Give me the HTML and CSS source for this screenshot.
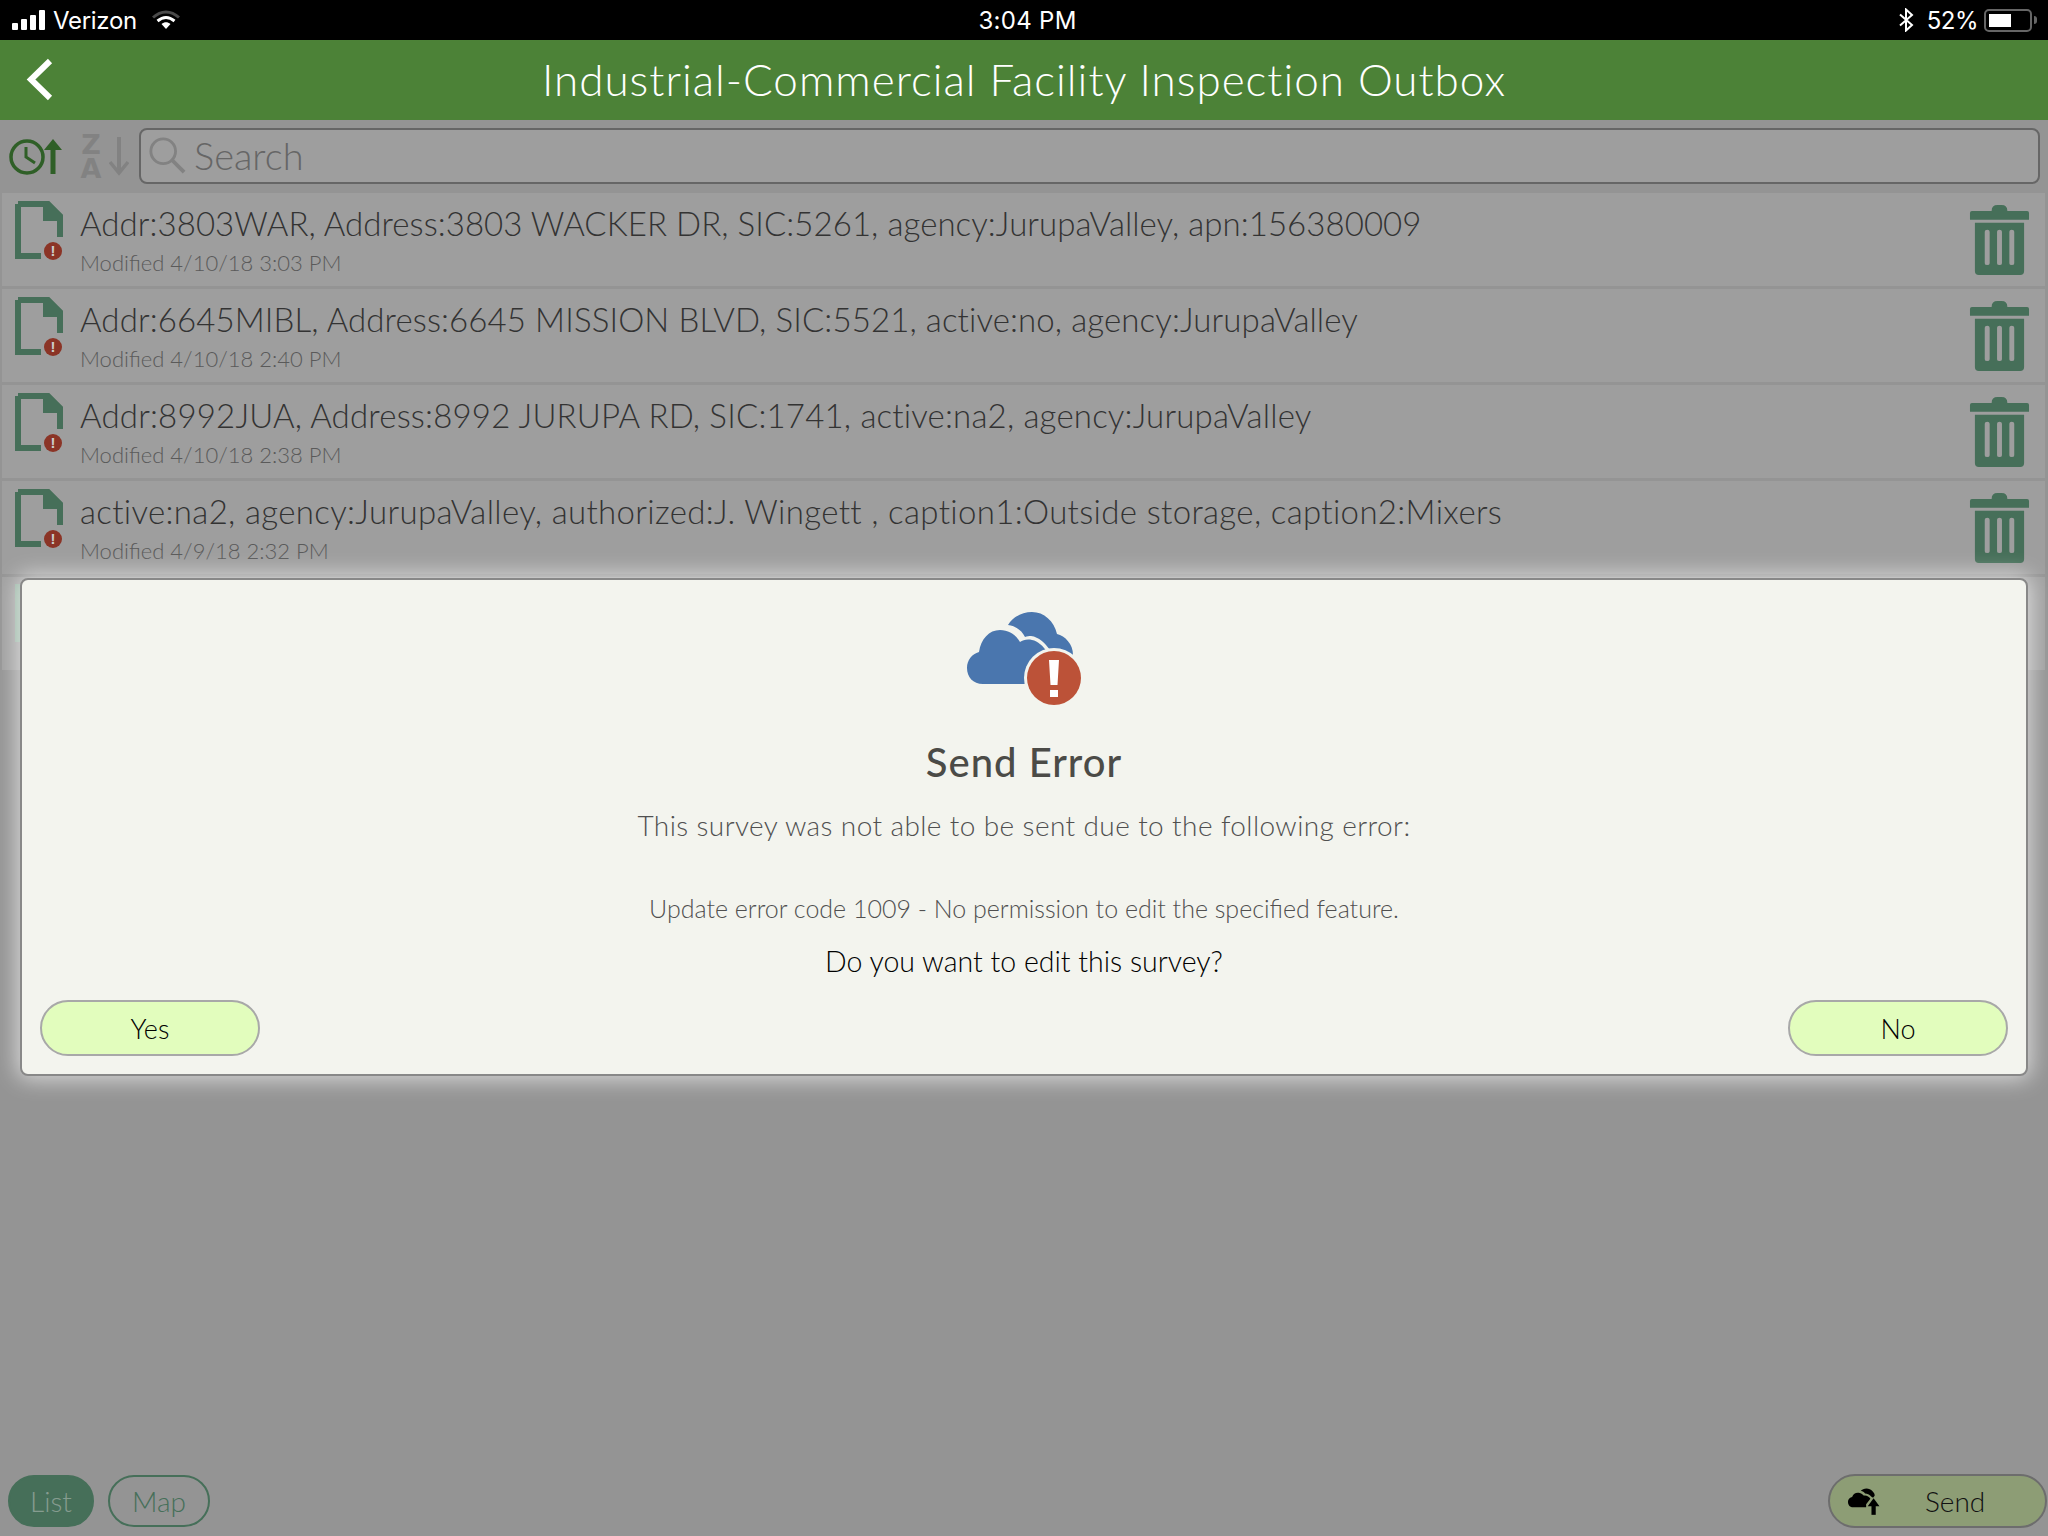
FILE: index.html
```html
<!DOCTYPE html>
<html lang="en">
<head>
    <meta charset="UTF-8">
    <meta name="viewport" content="width=device-width, initial-scale=1.0">
    <title>Outbox</title>
    <link rel="stylesheet" href="styles.css">
</head>
<body>
<svg class="defs" width="0" height="0">
    <symbol id="doc" viewBox="0 0 48 60">
        <path d="M3 3H33L45 15V36M45 17H31V3M26 55H3V3" fill="none" stroke="currentColor" stroke-width="6"/>
        <path d="M31 1H34L47 14V19H31Z" fill="currentColor"/>
    </symbol>
    <symbol id="trash" viewBox="0 0 62 72">
        <path d="M23 6Q23 0 29 0H33Q39 0 39 6H59Q61 6 61 8V15H1V8Q1 6 3 6Z" fill="currentColor"/>
        <path fill-rule="evenodd" d="M6 18H56V67Q56 71 52 71H10Q6 71 6 67ZM16 27V59Q16 61 18.500 61Q21 61 21 59V27Q21 25 18.500 25Q16 25 16 27ZM28.500 27V59Q28.500 61 31 61Q33.500 61 33.500 59V27Q33.500 25 31 25Q28.500 25 28.500 27ZM41 27V59Q41 61 43.500 61Q46 61 46 59V27Q46 25 43.500 25Q41 25 41 27Z" fill="currentColor"/>
    </symbol>
</svg>

<div class="app">
    <!-- Status bar -->
    <div class="statusbar">
        <div class="status-left">
            <span class="signal"><i></i><i></i><i></i><i></i></span>
            <span class="carrier">Verizon</span>
            <svg class="wifi" viewBox="0 0 28 20" width="28" height="20">
                <path d="M1 7.500C9 0 19 0 27 7.500" fill="none" stroke="#4a4a4a" stroke-width="3"/>
                <path d="M5.500 11C11 6.500 17 6.500 22.500 11" fill="none" stroke="#fff" stroke-width="3"/>
                <path d="M9.500 14C12.500 11.500 15.500 11.500 18.500 14L14 19Z" fill="#fff"/>
            </svg>
        </div>
        <div class="status-time">3:04 PM</div>
        <div class="status-right">
            <svg class="bt" viewBox="0 0 16 24" width="16" height="24">
                <path d="M2 6.500L14 17L8 22.500V1.500L14 7L2 17.500" fill="none" stroke="#fff" stroke-width="2"/>
            </svg>
            <span class="pct">52%</span>
            <span class="battery"><span class="battery-fill"></span></span>
            <span class="battery-tip"></span>
        </div>
    </div>

    <!-- Title bar -->
    <header class="titlebar">
        <svg class="back" viewBox="0 0 28 44" width="28" height="44">
            <path d="M24 3L5 21.500L24 40" fill="none" stroke="#fff" stroke-width="6"/>
        </svg>
        <h1>Industrial-Commercial Facility Inspection Outbox</h1>
    </header>

    <!-- Sort buttons and search -->
    <div class="toolbar">
        <svg class="sort-time" viewBox="0 0 56 40" width="56" height="40">
            <circle cx="19" cy="21" r="16" fill="none" stroke="#2f5f27" stroke-width="3.500"/>
            <path d="M18 11V21L27 27" fill="none" stroke="#2f5f27" stroke-width="3"/>
            <path d="M45 38V10" stroke="#2f5f27" stroke-width="5"/>
            <path d="M36 14L45 3L54 14Z" fill="#2f5f27"/>
        </svg>
        <div class="sort-az">
            <div class="az"><span>Z</span><span>A</span></div>
            <svg viewBox="0 0 20 40" width="20" height="40">
                <path d="M10 1V34" stroke="#828282" stroke-width="4"/>
                <path d="M1 26L10 37L19 26" fill="none" stroke="#828282" stroke-width="3.500"/>
            </svg>
        </div>
        <div class="search">
            <svg viewBox="0 0 40 40" width="38" height="38">
                <circle cx="16" cy="16" r="13" fill="none" stroke="#828282" stroke-width="3"/>
                <path d="M25 25L38 38" stroke="#828282" stroke-width="4"/>
            </svg>
            <span>Search</span>
        </div>
    </div>

    <!-- Outbox list -->
    <ul class="list">
        <li class="row">
            <div class="doc"><svg><use href="#doc"/></svg><b>!</b></div>
            <div class="row-text">
                <div class="row-title">Addr:3803WAR, Address:3803 WACKER DR, SIC:5261, agency:JurupaValley, apn:156380009</div>
                <div class="row-date">Modified 4/10/18 3:03 PM</div>
            </div>
            <svg class="trash"><use href="#trash"/></svg>
        </li>
        <li class="row">
            <div class="doc"><svg><use href="#doc"/></svg><b>!</b></div>
            <div class="row-text">
                <div class="row-title">Addr:6645MIBL, Address:6645 MISSION BLVD, SIC:5521, active:no, agency:JurupaValley</div>
                <div class="row-date">Modified 4/10/18 2:40 PM</div>
            </div>
            <svg class="trash"><use href="#trash"/></svg>
        </li>
        <li class="row">
            <div class="doc"><svg><use href="#doc"/></svg><b>!</b></div>
            <div class="row-text">
                <div class="row-title">Addr:8992JUA, Address:8992 JURUPA RD, SIC:1741, active:na2, agency:JurupaValley</div>
                <div class="row-date">Modified 4/10/18 2:38 PM</div>
            </div>
            <svg class="trash"><use href="#trash"/></svg>
        </li>
        <li class="row">
            <div class="doc"><svg><use href="#doc"/></svg><b>!</b></div>
            <div class="row-text">
                <div class="row-title">active:na2, agency:JurupaValley, authorized:J. Wingett , caption1:Outside storage, caption2:Mixers</div>
                <div class="row-date">Modified 4/9/18 2:32 PM</div>
            </div>
            <svg class="trash"><use href="#trash"/></svg>
        </li>
        <li class="row row-hidden"><span class="stub"></span></li>
    </ul>

    <!-- Bottom buttons -->
    <footer class="bottombar">
        <div class="tabs">
            <span class="tab tab-on">List</span>
            <span class="tab">Map</span>
        </div>
        <div class="send">
            <svg viewBox="0 0 30 25" width="32" height="27">
                <path d="M5 18C1 18 0 15 0 13C0 10 2 9 4 8C5 5 8 3.500 11 4.500C13 5 14 6 15 7C17 6.500 20 8 21 10L17 15V18Z" fill="#000"/>
                <path d="M12 2.500C14 0 20 -1 23 3C25 5 25 6 25 7L23.500 9L22 8C20 6 18 5 16 5C15 3.500 14 3 12 2.500Z" fill="#000"/>
                <path d="M24 25V15" stroke="#000" stroke-width="4"/>
                <path d="M18.500 17L24 9.500L29.500 17Z" fill="#000"/>
            </svg>
            <span>Send</span>
        </div>
    </footer>

    <!-- Error dialog -->
    <div class="dialog">
        <svg class="cloud" viewBox="0 0 118 94" width="118" height="94">
            <path d="M41 13C46 5 55 0 65 0C77 0 87 9 90 22C98 24 106 32 106 43C101 40 94 39 87 39C85 39 83 39 83 38C78 31 72 25 64 24C62 24 60 24 58 25C55 19 49 14 41 13Z" fill="#4a76ae"/>
            <path d="M16 72C6 72 0 65 0 56C0 48 5 42 12 40C14 27 22 18 33 18C42 18 49 23 53 30C56 28 60 27 65 28C71 29 76 34 80 40C68 44 59 55 59 66V72Z" fill="#4a76ae"/>
            <circle cx="87" cy="66" r="30" fill="#f3f4ee"/>
            <circle cx="87" cy="66" r="27" fill="#bc5238"/>
            <path d="M82 48H92L90.500 73H83.500ZM83 78H91V85H83Z" fill="#fff"/>
        </svg>
        <h2>Send Error</h2>
        <p class="msg">This survey was not able to be sent due to the following error:</p>
        <p class="detail">Update error code 1009 - No permission to edit the specified feature.</p>
        <p class="ask">Do you want to edit this survey?</p>
        <div class="dialog-buttons">
            <button>Yes</button>
            <button>No</button>
        </div>
    </div>
</div>
</body>
</html>
```

FILE: styles.css
```css
/* Basic reset */
* {
    margin: 0;
    padding: 0;
    box-sizing: border-box;
}

body {
    font-family: Lato, "Open Sans", sans-serif;
    font-weight: 300;
    background-color: #949494;
}

.defs {
    position: absolute;
}

.app {
    position: relative;
    display: flex;
    flex-direction: column;
    height: 1536px;
}

/* Status bar */
.statusbar {
    display: grid;
    grid-template-columns: 1fr auto 1fr;
    align-items: center;
    height: 40px;
    padding: 0 11px 0 12px;
    background-color: #000;
    color: #fff;
    font-family: Inter, sans-serif;
    font-size: 24px;
    font-weight: 400;
}

.status-left {
    display: flex;
    align-items: center;
}

.signal {
    display: flex;
    align-items: flex-end;
    gap: 3px;
    height: 20px;
}

.signal i {
    width: 6px;
    background-color: #fff;
    border-radius: 1px;
}

.signal i:nth-child(1) { height: 7px; }
.signal i:nth-child(2) { height: 11px; }
.signal i:nth-child(3) { height: 15px; }
.signal i:nth-child(4) { height: 20px; }

.carrier {
    margin-left: 8px;
    letter-spacing: -0.3px;
}

.wifi {
    margin-left: 15px;
}

.status-time {
    letter-spacing: 0.3px;
    transform: translateX(3px);
}

.status-right {
    display: flex;
    align-items: center;
    justify-content: flex-end;
}

.pct {
    margin-left: 13px;
    margin-right: 6px;
    letter-spacing: -0.5px;
}

.battery {
    display: block;
    width: 48px;
    height: 23px;
    padding: 3px;
    border: 2px solid #666;
    border-radius: 5px;
}

.battery-fill {
    display: block;
    width: 22px;
    height: 100%;
    background-color: #fff;
}

.battery-tip {
    width: 3px;
    height: 8px;
    margin-left: 2px;
    background-color: #666;
    border-radius: 0 3px 3px 0;
}

/* Title bar */
.titlebar {
    position: relative;
    display: flex;
    align-items: center;
    justify-content: center;
    height: 80px;
    padding-bottom: 2px;
    background-color: #4c8237;
    color: #fff;
}

.back {
    position: absolute;
    left: 26px;
    top: 18px;
}

h1 {
    font-size: 44px;
    font-weight: 300;
    letter-spacing: 1px;
}

/* Toolbar */
.toolbar {
    display: flex;
    align-items: center;
    height: 73px;
    padding: 0 8px 2px 8px;
}

.sort-time {
    flex: none;
}

.sort-az {
    display: flex;
    align-items: center;
    gap: 6px;
    margin-left: 15px;
}

.az {
    display: flex;
    flex-direction: column;
    align-items: center;
    width: 24px;
    margin-top: 2px;
    font-family: "DejaVu Sans", sans-serif;
    font-size: 27px;
    font-weight: 700;
    line-height: 24px;
    color: #828282;
}

.search {
    flex: 1;
    display: flex;
    align-items: center;
    height: 56px;
    margin-left: 10px;
    padding: 0 0 2px 7px;
    background-color: #9e9e9e;
    border: 2px solid #666;
    border-radius: 8px;
    font-size: 38px;
    color: #666;
}

.search span {
    margin-left: 8px;
}

/* List */
.list {
    list-style: none;
    display: flex;
    flex-direction: column;
    gap: 3px;
}

.row {
    display: flex;
    align-items: center;
    height: 93px;
    margin: 0 3px 0 2px;
    padding: 0 15px 0 13px;
    background-color: #9e9e9e;
}

.doc {
    position: relative;
    flex: none;
    width: 50px;
    height: 60px;
    color: #466f59;
    align-self: flex-start;
    margin-top: 8px;
}

.doc svg {
    display: block;
    width: 48px;
    height: 60px;
}

.doc b {
    position: absolute;
    right: 3px;
    bottom: 1px;
    width: 18px;
    height: 18px;
    border-radius: 50%;
    background-color: #8b3426;
    color: #ccc;
    font-family: "Liberation Sans", sans-serif;
    font-size: 15px;
    font-weight: 700;
    line-height: 18px;
    text-align: center;
}

.row-text {
    flex: 1;
    margin-left: 15px;
}

.row-title {
    font-size: 33px;
    line-height: 40px;
    color: #333;
    white-space: nowrap;
}

/* Lato runs a little narrower than the screenshot's font, more so on lowercase */
.row:nth-child(1) .row-title { letter-spacing: 0.06px; }
.row:nth-child(2) .row-title { letter-spacing: 0.11px; }
.row:nth-child(3) .row-title { letter-spacing: 0.18px; }
.row:nth-child(4) .row-title { letter-spacing: 0.34px; }

.row-date {
    margin-top: 6px;
    font-size: 22px;
    line-height: 28px;
    color: #5a5a5a;
}

.trash {
    flex: none;
    align-self: flex-start;
    width: 61px;
    height: 71px;
    margin-top: 12px;
    color: #466f59;
}

.row-hidden {
    background-color: #a0a0a0;
}

.stub {
    width: 8px;
    height: 58px;
    background-color: #9ab5a5;
    align-self: flex-start;
    margin-top: 7px;
}

/* Bottom buttons */
.bottombar {
    display: flex;
    align-items: center;
    justify-content: space-between;
    margin-top: auto;
    padding: 0 1px 8px 8px;
}

.tabs {
    display: flex;
    gap: 14px;
}

.tab {
    display: flex;
    align-items: center;
    justify-content: center;
    width: 102px;
    height: 52px;
    border: 2px solid #466f59;
    border-radius: 26px;
    font-size: 28px;
    color: #466f59;
}

.tab-on {
    width: 86px;
    background-color: #466f59;
    color: #869c90;
}

.send {
    display: flex;
    align-items: center;
    width: 219px;
    height: 54px;
    padding-left: 18px;
    background-color: #8d9d75;
    border: 2px solid #6d6d6d;
    border-radius: 27px;
    font-size: 28px;
    color: #111;
}

.send span {
    margin-left: 45px;
}

/* Dialog */
.dialog {
    position: absolute;
    left: 20px;
    top: 578px;
    width: 2008px;
    height: 498px;
    display: flex;
    flex-direction: column;
    align-items: center;
    padding: 32px 18px 18px;
    background-color: #f3f4ee;
    border: 2px solid #888;
    border-radius: 8px;
    box-shadow: 0 0 22px 3px rgba(255, 255, 255, 0.65);
}

.cloud {
    margin-left: 4px;
}

h2 {
    margin-top: 31px;
    font-size: 40px;
    line-height: 50px;
    font-weight: 500;
    letter-spacing: 1px;
    color: #4b4b47;
}

.msg {
    margin-top: 19px;
    font-size: 28px;
    line-height: 38px;
    letter-spacing: 0.4px;
    color: #505050;
}

.detail {
    margin-top: 47px;
    font-size: 25px;
    line-height: 34px;
    color: #505050;
}

.ask {
    margin-top: 18px;
    font-size: 28.500px;
    line-height: 36px;
    color: #000;
}

.dialog-buttons {
    display: flex;
    justify-content: space-between;
    width: 100%;
    margin-top: auto;
}

button {
    width: 220px;
    height: 56px;
    background-color: #e2fdbd;
    border: 2px solid #a8a8a8;
    border-radius: 28px;
    font-family: inherit;
    font-size: 27px;
    font-weight: 300;
    color: #000;
}
```
